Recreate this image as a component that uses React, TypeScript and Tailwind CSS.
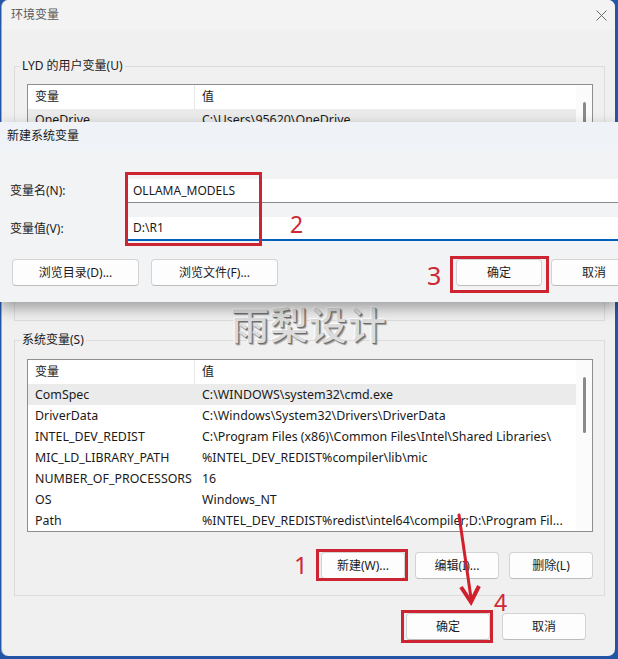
import React from 'react';

const sysVars: [string, string][] = [
  ['ComSpec', 'C:\\WINDOWS\\system32\\cmd.exe'],
  ['DriverData', 'C:\\Windows\\System32\\Drivers\\DriverData'],
  ['INTEL_DEV_REDIST', 'C:\\Program Files (x86)\\Common Files\\Intel\\Shared Libraries\\'],
  ['MIC_LD_LIBRARY_PATH', '%INTEL_DEV_REDIST%compiler\\lib\\mic'],
  ['NUMBER_OF_PROCESSORS', '16'],
  ['OS', 'Windows_NT'],
  ['Path', '%INTEL_DEV_REDIST%redist\\intel64\\compiler;D:\\Program Fil...'],
];

// only the first row shows above the new-variable dialog
const userVars: [string, string][] = [['OneDrive', 'C:\\Users\\95620\\OneDrive']];

const Btn = ({ children, className = '' }: { children: React.ReactNode; className?: string }) => (
  <div
    className={`flex h-[27px] shrink-0 items-center justify-center rounded-[4px] border border-[#d3d3d3] border-b-[#bdbdbd] bg-[#fdfdfd] text-[12px] text-[#1b1b1b] ${className}`}
  >
    {children}
  </div>
);

const VarTable = ({ rows, height }: { rows: [string, string][]; height: string }) => (
  <div className={`ml-[12px] flex w-[566px] border border-[#8e8e8e] bg-white ${height}`}>
    <div className="flex min-w-0 flex-1 flex-col overflow-hidden">
      <div className="flex h-[24px] shrink-0 items-center">
        <div className="flex h-full w-[167px] items-center border-r border-[#e6e6e6] pl-[7px]">变量</div>
        <div className="pl-[7px]">值</div>
      </div>
      {rows.map(([k, v], i) => (
        <div key={k} className={`flex h-[21px] shrink-0 items-center text-[12.4px] ${i === 0 ? 'bg-[#ebebeb]' : ''}`}>
          <div className="w-[167px] shrink-0 pl-[7px] whitespace-nowrap">{k}</div>
          <div className="pl-[7px] whitespace-nowrap">{v}</div>
        </div>
      ))}
    </div>
    <div className="flex w-[16px] shrink-0 justify-center bg-[#fbfbfb] pt-[17px]">
      <div className="h-[56px] w-[3px] rounded-full bg-[#8a8a8a]" />
    </div>
  </div>
);

const Red = ({ className }: { className: string }) => (
  <div className={`absolute border-[3px] border-[#cc2430] ${className}`} />
);

export default function App() {
  return (
    <div className="relative h-[659px] w-[618px] overflow-hidden bg-[#2456a8] font-['Noto_Sans','Noto_Sans_CJK_SC',sans-serif] text-[12px] leading-[16px] text-[#1a1a1a]">
      {/* main window */}
      <div className="ml-[1px] flex h-[656px] w-[614px] flex-col rounded-[7px] border-l border-[#a8a8a8] bg-[#f0f0f0]">
        <div className="flex h-[30px] shrink-0 items-center justify-between rounded-t-[7px] bg-[#f3f3f3] pl-[9px] pr-[8px]">
          <span className="text-[#5c5c5c]">环境变量</span>
          <svg width="11" height="11" viewBox="0 0 11 11">
            <path d="M0.5 0.5 L10.5 10.5 M10.5 0.5 L0.5 10.5" stroke="#6a6a6a" strokeWidth="1" />
          </svg>
        </div>

        <fieldset className="ml-[12px] mt-[28px] h-[263px] w-[591px] shrink-0 border border-[#dcdcdc]">
          <legend className="ml-[5px] px-[2px]">LYD 的用户变量(U)</legend>
          <div className="mt-[10px]">
            <VarTable rows={userVars} height="h-[150px]" />
          </div>
        </fieldset>

        <fieldset className="ml-[12px] mt-[11px] h-[264px] w-[591px] shrink-0 border border-[#dcdcdc]">
          <legend className="ml-[5px] px-[2px]">系统变量(S)</legend>
          <div className="mt-[11px]">
            <VarTable rows={sysVars} height="h-[173px]" />
          </div>
          <div className="mr-[11px] mt-[20px] flex justify-end gap-[10px]">
            <Btn className="w-[84px]">新建(W)...</Btn>
            <Btn className="w-[84px]">编辑(I)...</Btn>
            <Btn className="w-[84px]">删除(L)</Btn>
          </div>
        </fieldset>

        <div className="mr-[29px] mt-[17px] flex justify-end gap-[12px]">
          <Btn className="w-[84px]">确定</Btn>
          <Btn className="w-[84px]">取消</Btn>
        </div>
      </div>

      {/* watermark */}
      <div className="absolute left-[231px] top-[305px] text-[38px] font-medium leading-none tracking-[1px] text-[#dcdcdc] [text-shadow:1px_1px_0_#6e6e6e,2px_2px_1px_#9a9a9a,-1px_-1px_0_#ffffff]">
        雨梨设计
      </div>

      {/* new system variable dialog */}
      <div className="absolute left-0 top-[122px] flex h-[180px] w-[618px] flex-col overflow-hidden bg-[#f2f3f5] shadow-[0_6px_14px_rgba(0,0,0,0.35)]">
        <div className="flex h-[28px] shrink-0 items-center bg-[#eff2f7] pl-[7px]">新建系统变量</div>
        <div className="mt-[29px] flex h-[24px] shrink-0 items-center">
          <div className="w-[128px] shrink-0 pl-[10px]">变量名(N):</div>
          <div className="flex h-full flex-1 items-center border-b border-[#8a8a8a] bg-white pl-[5px]">OLLAMA_MODELS</div>
        </div>
        <div className="mt-[14px] flex h-[24px] shrink-0 items-center">
          <div className="w-[128px] shrink-0 pl-[10px]">变量值(V):</div>
          <div className="flex h-full flex-1 items-center border-b-2 border-[#005fb8] bg-white pl-[5px]">D:\R1</div>
        </div>
        <div className="mt-[18px] flex shrink-0">
          <Btn className="ml-[12px] w-[127px]">浏览目录(D)...</Btn>
          <Btn className="ml-[12px] w-[127px]">浏览文件(F)...</Btn>
          <Btn className="ml-[178px] w-[86px] border-[#3a6b9c] border-b-[#3a6b9c]">确定</Btn>
          <Btn className="ml-[9px] w-[86px]">取消</Btn>
        </div>
      </div>

      {/* annotations */}
      <Red className="left-[125px] top-[172px] h-[74px] w-[137px]" />
      <Red className="left-[450px] top-[256px] h-[37px] w-[99px]" />
      <Red className="left-[316px] top-[549px] h-[32px] w-[92px]" />
      <Red className="left-[401px] top-[610px] h-[33px] w-[92px]" />

      <span className="absolute left-[290px] top-[213px] text-[23px] leading-none text-[#cc2a35]">2</span>
      <span className="absolute left-[427px] top-[263px] text-[25px] leading-none text-[#cc2a35]">3</span>
      <span className="absolute left-[294px] top-[553px] text-[24px] leading-none text-[#cc2a35]">1</span>
      <span className="absolute left-[494px] top-[591px] text-[23px] leading-none text-[#cc2a35]">4</span>

      <svg className="absolute left-[450px] top-[510px]" width="40" height="100" viewBox="450 510 40 100">
        <path d="M459 515 L471 598" stroke="#d0202c" strokeWidth="3" strokeLinecap="round" fill="none" />
        <path d="M461 587 L471 602 L479 586" stroke="#d0202c" strokeWidth="4" strokeLinejoin="miter" fill="none" />
      </svg>
    </div>
  );
}
